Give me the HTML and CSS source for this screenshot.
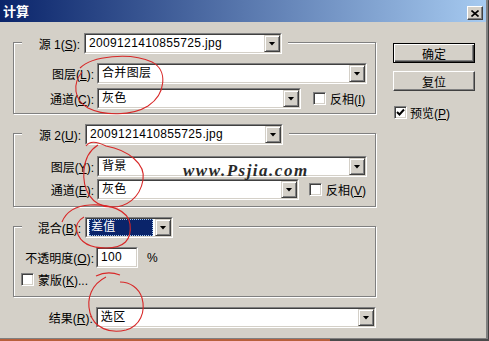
FILE: index.html
```html
<!DOCTYPE html>
<html lang="zh-CN">
<head>
    <meta charset="UTF-8">
    <title>计算</title>
    <link rel="stylesheet" href="styles.css">
</head>
<body>
    <div class="window">
        <div class="titlebar">
            <span class="title">计算</span>
            <span class="close">
                <svg width="8" height="7" viewBox="0 0 8 7"><path d="M0.5 0.5 L7.5 6.5 M7.5 0.5 L0.5 6.5" stroke="#000" stroke-width="1.6"/></svg>
            </span>
        </div>

        <div class="content">
            <div class="left">
                <!-- source 1 -->
                <div class="group g1">
                    <div class="legend">
                        <span class="legend-label">源 1(<u>S</u>):</span>
                        <div class="combo w-src"><div class="combo-in"><span class="val">2009121410855725.jpg</span><span class="drop"></span></div></div>
                    </div>
                    <div class="row first">
                        <span class="lbl">图层(<u>L</u>):</span>
                        <div class="combo w-long"><div class="combo-in"><span class="val">合并图层</span><span class="drop"></span></div></div>
                    </div>
                    <div class="row second">
                        <span class="lbl">通道(<u>C</u>):</span>
                        <div class="combo w-chan1"><div class="combo-in"><span class="val">灰色</span><span class="drop"></span></div></div>
                        <span class="check gap1"></span>
                        <span class="check-text">反相(<u>I</u>)</span>
                    </div>
                </div>

                <!-- source 2 -->
                <div class="group g2">
                    <div class="legend">
                        <span class="legend-label wide">源 2(<u>U</u>):</span>
                        <div class="combo w-src"><div class="combo-in"><span class="val">2009121410855725.jpg</span><span class="drop"></span></div></div>
                    </div>
                    <div class="row first">
                        <span class="lbl">图层(<u>Y</u>):</span>
                        <div class="combo w-long"><div class="combo-in"><span class="val">背景</span><span class="drop"></span></div></div>
                    </div>
                    <div class="row second">
                        <span class="lbl">通道(<u>E</u>):</span>
                        <div class="combo w-chan2"><div class="combo-in"><span class="val">灰色</span><span class="drop"></span></div></div>
                        <span class="check gap2"></span>
                        <span class="check-text">反相(<u>V</u>)</span>
                    </div>
                </div>

                <!-- blending -->
                <div class="group g3">
                    <div class="legend">
                        <span class="legend-label wide">混合(<u>B</u>):</span>
                        <div class="combo w-blend"><div class="combo-in"><span class="val"><span class="selected">差值</span></span><span class="drop"></span></div></div>
                    </div>
                    <div class="row first">
                        <span class="lbl">不透明度(<u>O</u>):</span>
                        <div class="field"><div class="combo-in"><span class="val">100</span></div></div>
                        <span class="pct">%</span>
                    </div>
                    <div class="row mask">
                        <span class="check"></span>
                        <span class="check-text">蒙版(<u>K</u>)...</span>
                    </div>
                </div>

                <div class="row result">
                    <span class="lbl">结果(<u>R</u>):</span>
                    <div class="combo w-result"><div class="combo-in"><span class="val">选区</span><span class="drop"></span></div></div>
                </div>
            </div>

            <div class="right">
                <div class="btn default">确定</div>
                <div class="btn">复位</div>
                <div class="preview">
                    <span class="check">
                        <svg width="9" height="9" viewBox="0 0 9 9"><path d="M1 4 L3.5 6.5 L8 1.5" stroke="#000" stroke-width="2" fill="none"/></svg>
                    </span>
                    <span class="check-text">预览(<u>P</u>)</span>
                </div>
            </div>
        </div>

        <div class="watermark">www.Psjia.com</div>

        <!-- red pen marks drawn over the dialog -->
        <svg class="marks" width="489" height="341" viewBox="0 0 489 341">
            <g fill="none" stroke="#d82828" stroke-width="1.1">
                <path d="M80 68 C92 56, 130 52, 152 62 C168 70, 166 94, 148 106 C132 116, 104 116, 88 108 C74 100, 72 84, 82 72"/>
                <path d="M86 146 C90 140, 98 142, 106 146 C128 150, 146 164, 143 180 C140 198, 126 208, 110 207 C92 206, 82 190, 84 170 C85 158, 90 150, 98 145"/>
                <path d="M62 222 C66 212, 74 206, 90 205 C110 204, 128 210, 130 224 C132 240, 124 248, 106 248 C90 248, 80 242, 77 232 C75 226, 78 220, 84 217"/>
                <path d="M96 276 C104 272, 112 272, 120 275 M106 277 C92 284, 86 298, 90 313 C94 328, 110 334, 126 330 C140 326, 146 312, 142 298 C139 288, 130 282, 120 282"/>
            </g>
        </svg>
    </div>
</body>
</html>
```

FILE: styles.css
```css
* {
    box-sizing: border-box;
}

body {
    margin: 0;
    background: linear-gradient(to right, #b8603c 0 330px, #4a4a4a 330px);
    font-family: "Liberation Sans", "Noto Sans CJK SC", sans-serif;
    font-size: 12px;
    color: #000;
}

u {
    text-decoration: underline;
    text-underline-offset: 1px;
}

.window {
    position: relative;
    width: 488px;
    height: 339px;
    background: #d4d0c8;
    border-right: 2px solid #808080;
    border-bottom: 1px solid #808080;
    box-shadow: 1px 1px 0 #404040;
    overflow: hidden;
}

/* title bar */
.titlebar {
    height: 22px;
    display: flex;
    justify-content: space-between;
    align-items: flex-start;
    padding-left: 3px;
    background: linear-gradient(to right, #0a246a, #a6caf0);
}

.title {
    color: #fff;
    font-weight: bold;
    font-size: 13px;
    line-height: 22px;
    font-family: "Noto Sans CJK SC", sans-serif;
}

.close {
    width: 16px;
    height: 14px;
    margin: 6px 3px 0 0;
    display: flex;
    align-items: center;
    justify-content: center;
    background: #d4d0c8;
    border: 1px solid;
    border-color: #fff #404040 #404040 #fff;
    box-shadow: inset -1px -1px 0 #808080;
}

/* main area */
.content {
    display: flex;
    padding-left: 13px;
}

.left {
    width: 363px;
}

.right {
    margin-left: 17px;
    padding-top: 21px;
    display: flex;
    flex-direction: column;
}

/* etched group boxes */
.group {
    border: 1px solid #808080;
    box-shadow: inset 1px 1px 0 #fff, 1px 1px 0 #fff;
}

.g1 {
    margin-top: 20px;
    padding-bottom: 4px;
}

.g2 {
    margin-top: 19px;
    padding-bottom: 6px;
}

.g3 {
    margin-top: 19px;
    padding-bottom: 10px;
}

.legend {
    display: flex;
    align-items: center;
    width: fit-content;
    margin: -10px 0 0 8px;
    padding-right: 6px;
    background: #d4d0c8;
}

.legend-label {
    width: 62px;
    padding-right: 4px;
    text-align: right;
    white-space: nowrap;
}

.legend-label.wide {
    width: 63px;
}

.row {
    display: flex;
    align-items: center;
    height: 21px;
}

.g1 .first {
    margin-top: 9px;
}

.g1 .second {
    margin-top: 4px;
}

.g2 .first {
    margin-top: 11px;
}

.g2 .second {
    margin-top: 2px;
}

.g3 .first {
    margin-top: 9px;
}

.row.mask {
    height: 13px;
    margin-top: 5px;
    padding-left: 7px;
}

.row.result {
    margin-top: 10px;
}

.lbl {
    width: 80px;
    margin-right: 3px;
    text-align: right;
    white-space: nowrap;
}

/* combo boxes and text fields */
.combo, .field {
    display: flex;
    height: 21px;
    background: #fff;
    border: 1px solid;
    border-color: #808080 #fff #fff #808080;
}

.combo-in {
    flex: 1;
    display: flex;
    border: 1px solid;
    border-color: #404040 #d4d0c8 #d4d0c8 #404040;
}

.val {
    flex: 1;
    padding-left: 3px;
    line-height: 17px;
    letter-spacing: 0.35px;
    white-space: nowrap;
}

.selected {
    display: inline-block;
    width: 64px;
    margin-left: -1px;
    padding-left: 2px;
    color: #fff;
    background: #0a246a;
    outline: 1px dotted #a6caf0;
    outline-offset: -1px;
}

.drop {
    width: 16px;
    display: flex;
    align-items: center;
    justify-content: center;
    background: #d4d0c8;
    border: 1px solid;
    border-color: #d4d0c8 #404040 #404040 #d4d0c8;
    box-shadow: inset 1px 1px 0 #fff, inset -1px -1px 0 #808080;
}

.drop::after {
    content: "";
    width: 7px;
    height: 4px;
    background: #000;
    clip-path: polygon(0 0, 100% 0, 50% 100%);
}

.w-src { width: 198px; }
.w-long { width: 270px; }
.w-chan1 { width: 204px; }
.w-chan2 { width: 202px; }
.w-blend { width: 88px; }
.w-result { width: 281px; }

.field {
    width: 42px;
    margin-left: -1px;
}

.pct {
    margin-left: 9px;
}

/* check boxes */
.check {
    width: 13px;
    height: 13px;
    display: flex;
    align-items: center;
    justify-content: center;
    background: #fff;
    border: 1px solid;
    border-color: #808080 #fff #fff #808080;
    box-shadow: inset 1px 1px 0 #404040, inset -1px -1px 0 #d4d0c8;
}

.check.gap1 {
    margin-left: 12px;
}

.check.gap2 {
    margin-left: 10px;
}

.check-text {
    margin-left: 4px;
    white-space: nowrap;
}

/* push buttons */
.btn {
    width: 82px;
    height: 20px;
    margin-bottom: 8px;
    display: flex;
    align-items: center;
    justify-content: center;
    border: 1px solid;
    border-color: #fff #404040 #404040 #fff;
    box-shadow: inset -1px -1px 0 #808080;
}

.btn.default {
    border: 1px solid #000;
    box-shadow: inset 1px 1px 0 #fff, inset -1px -1px 0 #404040, inset -2px -2px 0 #808080;
}

.preview {
    display: flex;
    align-items: center;
    margin-top: 5px;
    margin-left: 1px;
}

.preview .check-text {
    margin-left: 3px;
}

/* overlays */
.watermark {
    position: absolute;
    left: 183px;
    top: 162px;
    font-family: "Liberation Serif", serif;
    font-style: italic;
    font-weight: bold;
    font-size: 17px;
    line-height: 17px;
    letter-spacing: 1.5px;
    color: #2a2a2a;
}

.marks {
    position: absolute;
    left: 0;
    top: 0;
    pointer-events: none;
}
```
